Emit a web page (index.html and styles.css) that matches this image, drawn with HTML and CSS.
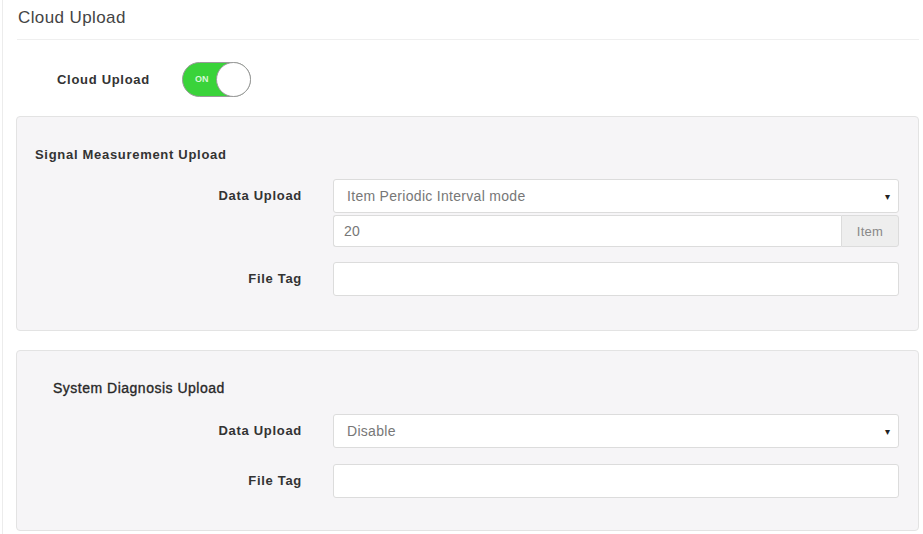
FILE: index.html
```html
<!DOCTYPE html>
<html>
<head>
<meta charset="utf-8">
<link rel="stylesheet" href="styles.css">
</head>
<body>
<div class="page">
  <div class="title">Cloud Upload</div>
  <div class="toggle-row">
    <span class="toggle-label">Cloud Upload</span>
    <span class="switch"><span class="switch-on">ON</span><span class="knob"></span></span>
  </div>

  <div class="panel panel-signal">
    <div class="panel-heading">Signal Measurement Upload</div>
    <div class="form-row">
      <label class="form-label">Data Upload</label>
      <div class="control-stack">
        <div class="select"><span>Item Periodic Interval mode</span><span class="caret">&#9662;</span></div>
        <div class="input-group">
          <div class="input input-flex">20</div>
          <div class="addon">Item</div>
        </div>
      </div>
    </div>
    <div class="form-row row-tag">
      <label class="form-label">File Tag</label>
      <div class="input"></div>
    </div>
  </div>

  <div class="panel panel-system">
    <div class="panel-heading heading-light">System Diagnosis Upload</div>
    <div class="form-row">
      <label class="form-label">Data Upload</label>
      <div class="select"><span>Disable</span><span class="caret">&#9662;</span></div>
    </div>
    <div class="form-row row-tag2">
      <label class="form-label">File Tag</label>
      <div class="input"></div>
    </div>
  </div>
</div>
</body>
</html>
```

FILE: styles.css
```css
html, body {
  margin: 0;
  padding: 0;
  background: #ffffff;
}
body {
  font-family: "Liberation Sans", Arial, sans-serif;
  color: #333;
  width: 923px;
  height: 534px;
  overflow: hidden;
}
.page {
  margin-left: 2px;
  border-left: 1px solid #ececec;
  padding-left: 13px;
  padding-right: 4px;
  height: 534px;
  box-sizing: border-box;
}
.title {
  font-size: 17px;
  letter-spacing: 0.4px;
  color: #444;
  padding: 8px 0 0 1px;
  height: 40px;
  box-sizing: border-box;
  border-bottom: 1px solid #efefef;
  margin-left: 1px;
}
.toggle-row {
  display: flex;
  align-items: center;
  height: 35px;
  margin-top: 22px;
  margin-bottom: 19px;
}
.toggle-label {
  font-size: 13px;
  letter-spacing: 0.7px;
  font-weight: bold;
  color: #333;
  margin-left: 41px;
  width: 125px;
}
.switch {
  position: relative;
  display: inline-block;
  width: 69px;
  height: 35px;
  border-radius: 18px;
  background: #3ad33a;
  border: 1px solid #9a9a9a;
  box-sizing: border-box;
}
.switch-on {
  position: absolute;
  left: 12px;
  top: 11px;
  font-size: 9px;
  color: #d8f8d8;
  font-weight: bold;
}
.knob {
  position: absolute;
  right: -1px;
  top: -1px;
  width: 35px;
  height: 35px;
  border-radius: 50%;
  background: #fff;
  border: 1px solid #999;
  box-sizing: border-box;
}
.panel {
  background: #f6f5f7;
  border: 1px solid #e3e3e3;
  border-radius: 4px;
  width: 903px;
  box-sizing: border-box;
  padding: 0 19px 0 0;
}
.panel-signal {
  height: 215px;
  padding-top: 30px;
  margin-bottom: 19px;
}
.panel-system {
  height: 181px;
  padding-top: 29px;
}
.panel-heading {
  font-size: 13px;
  letter-spacing: 0.7px;
  font-weight: bold;
  color: #333;
  height: 17px;
  margin-left: 18px;
  margin-bottom: 15px;
}
.heading-light {
  margin-left: 36px;
  font-size: 14px;
  letter-spacing: 0.5px;
  font-weight: normal;
  color: #222;
  -webkit-text-stroke: 0.35px #333;
  margin-bottom: 17px;
}
.form-row {
  display: grid;
  grid-template-columns: 285px 1fr;
  column-gap: 31px;
  align-items: start;
}
.row-tag {
  margin-top: 15px;
}
.row-tag2 {
  margin-top: 16px;
}
.form-label {
  text-align: right;
  font-size: 13px;
  letter-spacing: 0.7px;
  font-weight: bold;
  color: #333;
  line-height: 33px;
}
.control-stack {
  display: flex;
  flex-direction: column;
  gap: 2px;
}
.select, .input, .addon {
  height: 33px;
  box-sizing: border-box;
  border: 1px solid #dcdcdc;
  background: #fff;
  border-radius: 3px;
  font-size: 14px;
  letter-spacing: 0.3px;
  color: #777;
}
.select {
  display: flex;
  align-items: center;
  justify-content: space-between;
  padding: 0 8px 0 13px;
  height: 34px;
}
.caret {
  font-size: 10px;
  color: #222;
}
.input {
  display: flex;
  align-items: center;
  padding: 0 10px;
}
.input-group {
  display: flex;
}
.input-flex {
  flex: 1;
  border-radius: 3px 0 0 3px;
  border-right: none;
  height: 32px;
}
.addon {
  width: 58px;
  height: 32px;
  background: #eeeeee;
  border-radius: 0 3px 3px 0;
  display: flex;
  align-items: center;
  justify-content: center;
  color: #888;
  font-size: 13px;
}
.row-tag .input, .row-tag2 .input {
  height: 34px;
}
```
